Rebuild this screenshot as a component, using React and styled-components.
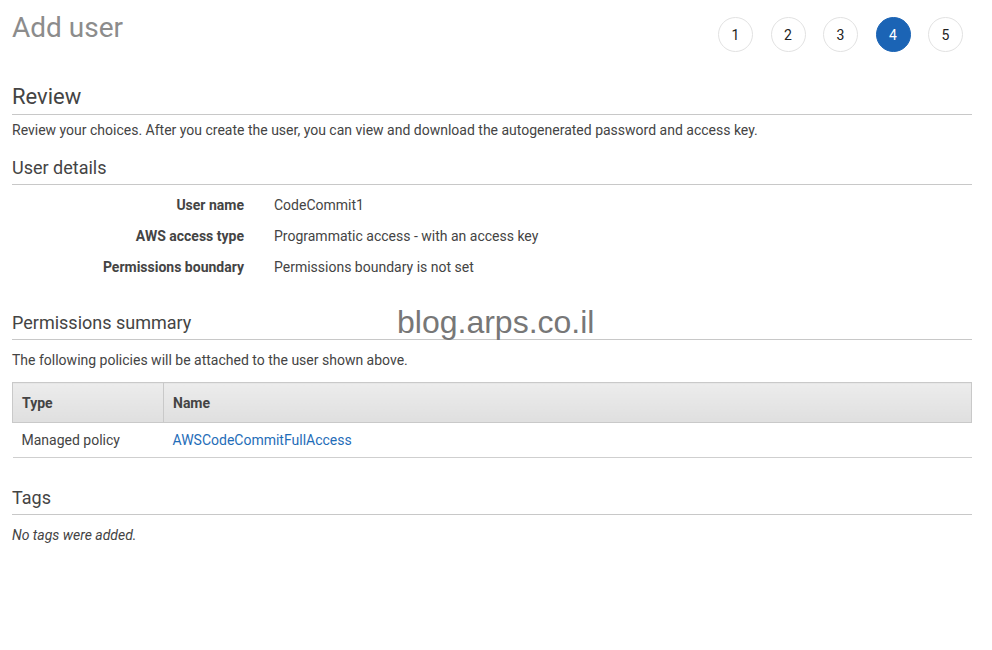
import React from "react";
import styled, { createGlobalStyle } from "styled-components";

const Global = createGlobalStyle`
  html, body { margin: 0; padding: 0; background: #fff; }
  body { font-family: Roboto, "Noto Sans", Arial, sans-serif; color: #444; }
`;

const Page = styled.div`
  position: relative;
  width: 960px;
  padding: 0 0 40px 12px;
`;

const TopBar = styled.div`
  display: flex;
  justify-content: space-between;
  align-items: flex-start;
  height: 70px;
`;

const Title = styled.h1`
  margin: 0;
  padding-top: 11px;
  font-size: 28px;
  line-height: 34px;
  font-weight: 400;
  color: #8c8c8c;
`;

const Steps = styled.div`
  display: flex;
  gap: 17.5px;
  padding-top: 17px;
  padding-right: 9px;
`;

const Step = styled.div`
  width: 35px;
  height: 35px;
  box-sizing: border-box;
  border-radius: 50%;
  border: 1px solid ${(p) => (p.$active ? "#1b64b5" : "#e2e2e2")};
  background: ${(p) => (p.$active ? "#1b64b5" : "#fff")};
  color: ${(p) => (p.$active ? "#fff" : "#222")};
  display: flex;
  align-items: center;
  justify-content: center;
  font-size: 14px;
`;

const SectionTitle = styled.h2`
  margin: ${(p) => p.$mt || 0}px 0 0;
  font-size: ${(p) => (p.$big ? 22 : 18)}px;
  line-height: ${(p) => (p.$big ? 26 : 22)}px;
  font-weight: 400;
  color: #444;
  padding-bottom: ${(p) => (p.$big ? 4 : 5)}px;
  border-bottom: 1px solid #c8c8c8;
`;

const Text = styled.p`
  margin: ${(p) => p.$mt || 0}px 0 0;
  font-size: 14px;
  line-height: 20px;
  color: #444;
  font-style: ${(p) => (p.$italic ? "italic" : "normal")};
`;

const Details = styled.div`
  display: grid;
  grid-template-columns: 232px 1fr;
  column-gap: 30px;
  margin-top: 5px;
`;

const Label = styled.div`
  text-align: right;
  font-size: 14px;
  line-height: 31px;
  font-weight: 700;
  color: #444;
`;

const Value = styled.div`
  font-size: 14px;
  line-height: 31px;
  color: #444;
`;

const Table = styled.table`
  margin-top: 12px;
  width: 960px;
  border-collapse: collapse;
  font-size: 14px;
`;

const Th = styled.th`
  text-align: left;
  font-weight: 700;
  color: #444;
  height: 39px;
  padding: 0 9px;
  background: linear-gradient(#ececec, #dfdfdf);
  border: 1px solid #c9c9c9;
  width: ${(p) => p.$w || "auto"};
`;

const Td = styled.td`
  height: 34px;
  padding: 0 9px;
  color: #444;
  border-bottom: 1px solid #cfcfcf;
`;

const Link = styled.a`
  color: #1f6db8;
  text-decoration: none;
`;

const Watermark = styled.div`
  position: absolute;
  left: 397px;
  top: 306px;
  font-family: "Liberation Sans", Arial, sans-serif;
  font-size: 32px;
  line-height: 32px;
  color: #777;
  pointer-events: none;
`;

export default function App() {
  return (
    <>
      <Global />
      <Page>
        <TopBar>
          <Title>Add user</Title>
          <Steps>
            {[1, 2, 3, 4, 5].map((n) => (
              <Step key={n} $active={n === 4}>
                {n}
              </Step>
            ))}
          </Steps>
        </TopBar>

        <SectionTitle $big $mt={14}>Review</SectionTitle>
        <Text $mt={5}>
          Review your choices. After you create the user, you can view and download the autogenerated password and access key.
        </Text>

        <SectionTitle $mt={17}>User details</SectionTitle>
        <Details>
          <Label>User name</Label>
          <Value>CodeCommit1</Value>
          <Label>AWS access type</Label>
          <Value>Programmatic access - with an access key</Value>
          <Label>Permissions boundary</Label>
          <Value>Permissions boundary is not set</Value>
        </Details>

        <SectionTitle $mt={29}>Permissions summary</SectionTitle>
        <Text $mt={10}>The following policies will be attached to the user shown above.</Text>
        <Table>
          <thead>
            <tr>
              <Th $w="132px">Type</Th>
              <Th>Name</Th>
            </tr>
          </thead>
          <tbody>
            <tr>
              <Td>Managed policy</Td>
              <Td>
                <Link href="#">AWSCodeCommitFullAccess</Link>
              </Td>
            </tr>
          </tbody>
        </Table>

        <SectionTitle $mt={29}>Tags</SectionTitle>
        <Text $mt={10} $italic>No tags were added.</Text>

        <Watermark>blog.arps.co.il</Watermark>
      </Page>
    </>
  );
}
